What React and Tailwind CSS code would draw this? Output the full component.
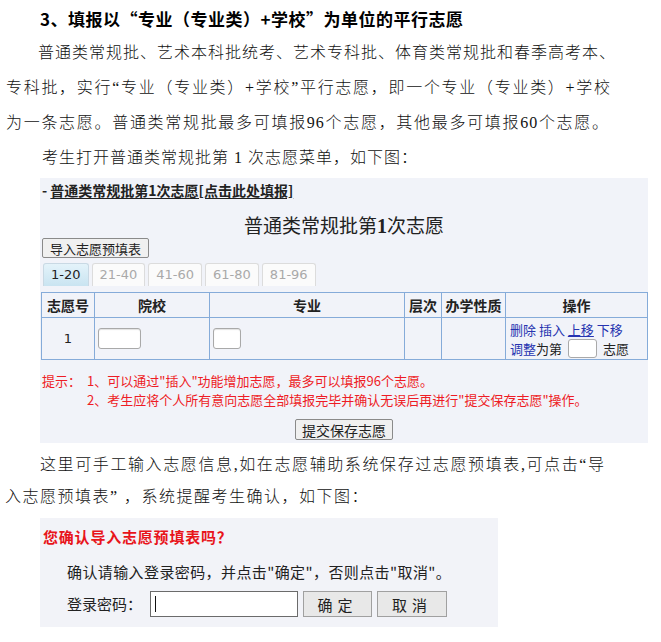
import React from 'react';

const Tab = ({ label, active }) => (
  <div
    className={
      active
        ? 'h-[23px] px-[7px] mr-[3px] flex items-center border border-[#c9d9e4] border-b-0 rounded-t-[3px] bg-gradient-to-b from-[#e4f3fa] to-[#c9e4f1] text-[#222]'
        : 'h-[23px] px-[7px] mr-[3px] flex items-center border border-[#dcdcdc] border-b-0 rounded-t-[3px] bg-[#fbfbfb] text-[#a9a9a9]'
    }
  >
    {label}
  </div>
);

const Box = ({ w }) => (
  <div className={`${w} h-[21px] bg-white border border-[#a9a9a9] rounded-[3px] shadow-[inset_0_1px_1px_rgba(0,0,0,0.12)]`} />
);

export default function App() {
  return (
    <div className="w-[661px] h-[642px] overflow-hidden bg-white text-[#111] font-['Liberation_Serif','Noto_Sans_CJK_SC',serif]">
      {/* Intro */}
      <div className="pt-[3px] text-[16px] tracking-[1px]">
        <h3 className="ml-[40px] h-[32px] leading-[32px] text-[17px] tracking-[0.5px] font-bold text-black font-['Noto_Sans_CJK_SC',sans-serif] whitespace-nowrap">
          3、填报以“专业（专业类）+学校”为单位的平行志愿
        </h3>
        <div className="ml-[38px] w-[573px] h-[35px] leading-[35px] font-light [text-align-last:justify] whitespace-nowrap">
          普通类常规批、艺术本科批统考、艺术专科批、体育类常规批和春季高考本、
        </div>
        <div className="ml-[6px] w-[605px] h-[35px] leading-[35px] font-light [text-align-last:justify] whitespace-nowrap">
          专科批，实行“专业（专业类）+学校”平行志愿，即一个专业（专业类）+学校
        </div>
        <div className="ml-[6px] w-[603px] h-[35px] leading-[35px] font-light [text-align-last:justify] whitespace-nowrap">
          为一条志愿。普通类常规批最多可填报96个志愿，其他最多可填报60个志愿。
        </div>
        <div className="ml-[42px] h-[35px] leading-[35px] font-light whitespace-nowrap">
          考生打开普通类常规批第 1 次志愿菜单，如下图：
        </div>
      </div>

      {/* Form panel */}
      <div className="mt-[3px] ml-[40px] w-[608px] h-[265px] bg-[#f1f3f9] font-['Noto_Sans_CJK_SC',sans-serif]">
        <div className="h-[24px] flex items-center pl-[2px] text-[14px] font-bold text-[#222] whitespace-nowrap">
          <span>-&nbsp;</span>
          <span className="underline underline-offset-2">普通类常规批第1次志愿[点击此处填报]</span>
        </div>
        <div className="mt-[12px] h-[24px] leading-[24px] text-center text-[19px] text-[#222] font-['Liberation_Serif','Noto_Sans_CJK_SC',serif]">
          普通类常规批第<span className="font-bold text-[20px]">1</span>次志愿
        </div>
        <button className="ml-[2px] h-[20px] px-[7px] flex items-center text-[13px] text-[#222] bg-[#f0f0f0] border border-[#8a8a8a] rounded-[2px] leading-none">
          导入志愿预填表
        </button>
        <div className="mt-[5px] ml-[3px] flex text-[13px] font-['DejaVu_Sans',sans-serif]">
          <Tab label="1-20" active />
          <Tab label="21-40" />
          <Tab label="41-60" />
          <Tab label="61-80" />
          <Tab label="81-96" />
        </div>

        <table className="mt-[6px] ml-[1px] w-[606px] table-fixed border-collapse text-[14px] text-[#222]">
          <colgroup>
            <col className="w-[53px]" />
            <col className="w-[115px]" />
            <col className="w-[195px]" />
            <col className="w-[37px]" />
            <col className="w-[64px]" />
            <col className="w-[142px]" />
          </colgroup>
          <thead>
            <tr className="h-[25px]">
              <th className="border border-[#85abd9] font-bold p-0">志愿号</th>
              <th className="border border-[#85abd9] font-bold p-0">院校</th>
              <th className="border border-[#85abd9] font-bold p-0">专业</th>
              <th className="border border-[#85abd9] font-bold p-0">层次</th>
              <th className="border border-[#85abd9] font-bold p-0">办学性质</th>
              <th className="border border-[#85abd9] font-bold p-0">操作</th>
            </tr>
          </thead>
          <tbody>
            <tr className="h-[42px]">
              <td className="border border-[#85abd9] text-center text-[13px] font-['DejaVu_Sans',sans-serif]">1</td>
              <td className="border border-[#85abd9] pl-[3px]">
                <Box w="w-[43px]" />
              </td>
              <td className="border border-[#85abd9] pl-[3px]">
                <Box w="w-[28px]" />
              </td>
              <td className="border border-[#85abd9]"></td>
              <td className="border border-[#85abd9]"></td>
              <td className="border border-[#85abd9] pl-[4px] text-[13px] leading-[19px]">
                <div className="text-[#2633b0] whitespace-nowrap">
                  删除 插入 <span className="underline">上移</span> 下移
                </div>
                <div className="flex items-center whitespace-nowrap">
                  <span className="text-[#2633b0]">调整</span>
                  <span>为第</span>
                  <span className="mx-[6px] w-[29px] h-[19px] bg-white border border-[#a9a9a9] rounded-[3px]" />
                  <span>志愿</span>
                </div>
              </td>
            </tr>
          </tbody>
        </table>

        <div className="mt-[11px] ml-[2px] flex text-[13px] leading-[19px] text-[#ee1c25] whitespace-nowrap">
          <div className="w-[45px]">提示：</div>
          <div className="flex flex-col">
            <span>1、可以通过"插入"功能增加志愿，最多可以填报96个志愿。</span>
            <span>2、考生应将个人所有意向志愿全部填报完毕并确认无误后再进行"提交保存志愿"操作。</span>
          </div>
        </div>

        <div className="mt-[10px] flex justify-center">
          <button className="h-[21px] px-[6px] flex items-center text-[14px] text-[#222] bg-[#f0f0f0] border border-[#8a8a8a] rounded-[2px] leading-none">
            提交保存志愿
          </button>
        </div>
      </div>

      {/* Second paragraph */}
      <div className="mt-[6px] text-[16px] tracking-[1px] font-light">
        <div className="ml-[40px] w-[565px] h-[32px] leading-[32px] [text-align-last:justify] whitespace-nowrap">
          这里可手工输入志愿信息,如在志愿辅助系统保存过志愿预填表,可点击“导
        </div>
        <div className="ml-[5px] h-[32px] leading-[32px] tracking-[1.5px] whitespace-nowrap">
          入志愿预填表” ，系统提醒考生确认，如下图：
        </div>
      </div>

      {/* Confirm dialog */}
      <div className="mt-[5px] ml-[40px] w-[458px] h-[109px] bg-[#f2f3f8] pt-[8px] font-['Noto_Sans_CJK_SC',sans-serif]">
        <div className="pl-[3px] h-[22px] leading-[22px] text-[15px] tracking-[0.8px] font-bold text-[#e8141a]">
          您确认导入志愿预填表吗？
        </div>
        <div className="mt-[13px] pl-[27px] h-[22px] leading-[22px] text-[15px] tracking-[0.4px] text-[#222] whitespace-nowrap">
          确认请输入登录密码，并点击"确定"，否则点击"取消"。
        </div>
        <div className="mt-[8px] pl-[27px] flex items-center h-[26px] text-[15px] text-[#222]">
          <span className="w-[83px]">登录密码：</span>
          <div className="w-[148px] h-[26px] bg-white border border-[#6b6b6b] flex items-center pl-[4px]">
            <span className="w-[1px] h-[16px] bg-[#111]" />
          </div>
          <button className="ml-[5px] w-[69px] h-[26px] bg-[#e8e8e8] border border-[#a0a0a0] text-[15px] tracking-[5px] leading-none">
            确定
          </button>
          <button className="ml-[5px] w-[70px] h-[26px] bg-[#e8e8e8] border border-[#a0a0a0] text-[15px] tracking-[5px] leading-none">
            取消
          </button>
        </div>
      </div>
    </div>
  );
}
